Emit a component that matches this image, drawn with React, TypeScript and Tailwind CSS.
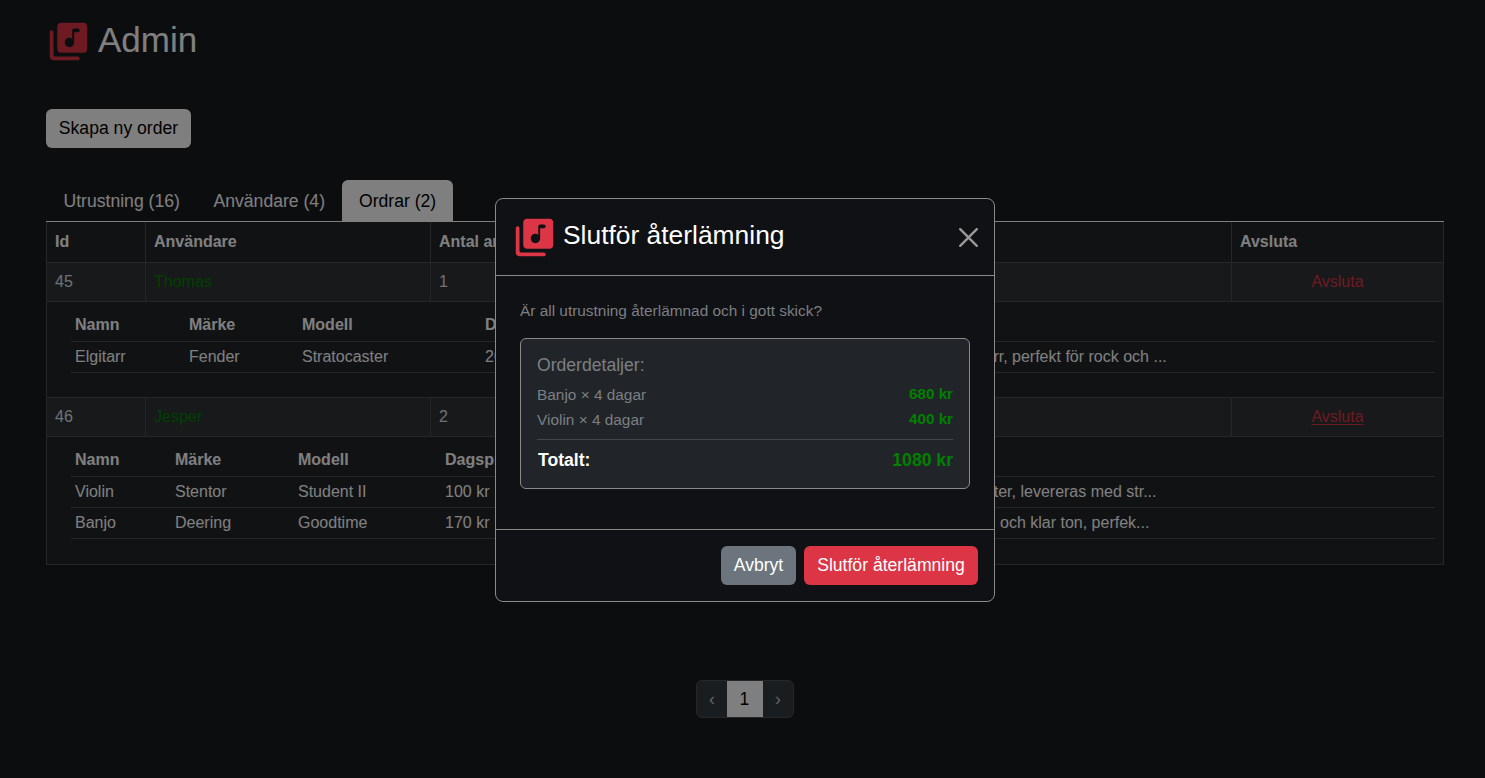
const musicPath =
  "M20 2H8c-1.1 0-2 .9-2 2v12c0 1.1.9 2 2 2h12c1.1 0 2-.9 2-2V4c0-1.1-.9-2-2-2zm-2 5h-3v5.5c0 1.38-1.12 2.5-2.5 2.5S10 13.88 10 12.5s1.12-2.5 2.5-2.5c.57 0 1.08.19 1.5.51V6c0-.55.45-1 1-1h2c.55 0 1 .45 1 1s-.45 1-1 1zM3 6c-.55 0-1 .45-1 1v13c0 1.1.9 2 2 2h13c.55 0 1-.45 1-1s-.45-1-1-1H5c-.55 0-1-.45-1-1V7c0-.55-.45-1-1-1z"

function LibraryIcon({className = ""}: { className?: string }) {
    return (
        <svg viewBox="0 0 24 24" className={`w-[45px] h-[45px] shrink-0 fill-[#dc3545] ${className}`}>
            <path d={musicPath}/>
        </svg>
    )
}

interface Item {
    name: string
    brand: string
    model: string
    price: string
    description: string
}

const firstOrder: Item[] = [
    {
        name: "Elgitarr",
        brand: "Fender",
        model: "Stratocaster",
        price: "200 kr",
        description: "Klassisk elgitarr, perfekt för rock och ...",
    },
]

const secondOrder: Item[] = [
    {
        name: "Violin",
        brand: "Stentor",
        model: "Student II",
        price: "100 kr",
        description: "Fiol för nybörjare och studenter, levereras med str...",
    },
    {
        name: "Banjo",
        brand: "Deering",
        model: "Goodtime",
        price: "170 kr",
        description: "Fin banjo med ljus klangfärg, och klar ton, perfek...",
    },
]

function ItemTable({items, widths, descPad}: { items: Item[]; widths: string[]; descPad: string }) {
    return (
        <table className="w-[1364px] table-fixed border-collapse">
            <colgroup>
                {widths.map((w) => (
                    <col key={w} className={w}/>
                ))}
                <col/>
            </colgroup>
            <thead>
            <tr className="border-b border-[#495057]">
                <th className="px-1 pt-1 pb-1 text-left font-bold leading-6">Namn</th>
                <th className="px-1 pt-1 pb-1 text-left font-bold leading-6">Märke</th>
                <th className="px-1 pt-1 pb-1 text-left font-bold leading-6">Modell</th>
                <th className="px-1 pt-1 pb-1 text-left font-bold leading-6">Dagspris</th>
                <th className={`pr-1 pt-1 pb-1 text-left font-bold leading-6 ${descPad}`}>Beskrivning</th>
            </tr>
            </thead>
            <tbody>
            {items.map((item) => (
                <tr key={item.name} className="border-b border-[#495057]">
                    <td className="px-1 py-[3px] leading-6">{item.name}</td>
                    <td className="px-1 py-[3px] leading-6">{item.brand}</td>
                    <td className="px-1 py-[3px] leading-6">{item.model}</td>
                    <td className="px-1 py-[3px] leading-6">{item.price}</td>
                    <td className={`pr-1 py-[3px] leading-6 whitespace-nowrap ${descPad}`}>{item.description}</td>
                </tr>
            ))}
            </tbody>
        </table>
    )
}

function OrderRow({id, user, count, items, widths, descPad, bottom, hover}: {
    id: number
    user: string
    count: number
    items: Item[]
    widths: string[]
    descPad: string
    bottom: string
    hover?: boolean
}) {
    return (
        <>
            <tr className="bg-[#2f3236] text-[#dee2e6]">
                <td className="border border-[#495057] px-2 py-[7px] leading-6">{id}</td>
                <td className="border border-[#495057] px-2 py-[7px] leading-6 text-[#008000]">{user}</td>
                <td className="border border-[#495057] px-2 py-[7px] leading-6">{count}</td>
                <td className="border border-[#495057] px-2 py-[7px] leading-6"></td>
                <td className="border border-[#495057] px-2 py-[7px] leading-6 text-center text-[#dc3545]">
                    <span className={hover ? "underline underline-offset-2" : ""}>Avsluta</span>
                </td>
            </tr>
            <tr>
                <td colSpan={5} className={`border border-[#495057] pl-6 pr-2 pt-[7px] ${bottom}`}>
                    <ItemTable items={items} widths={widths} descPad={descPad}/>
                </td>
            </tr>
        </>
    )
}

export default function App() {
    return (
        <div className="min-h-[778px] bg-[#181a1f] text-white pl-[46px] pr-[41px] font-['Liberation_Sans',Arial,sans-serif] text-base">
            <div className="flex items-center gap-[7px] pt-[19px]">
                <LibraryIcon/>
                <h1 className="text-[35px] leading-[41px] pb-1 font-normal">Admin</h1>
            </div>

            <button className="mt-[45px] h-[39px] w-[145px] rounded-md bg-white text-[17.6px] text-black">
                Skapa ny order
            </button>

            <div className="mt-8 flex border-b border-white text-[17.6px]">
                <div className="h-[41px] w-[151px] pl-[17.5px] pt-px leading-[41px]">Utrustning (16)</div>
                <div className="h-[41px] w-[145px] pl-[16.5px] pt-px leading-[41px]">Användare (4)</div>
                <div className="h-[41px] w-[111px] rounded-t-md bg-white pl-[17px] pt-px leading-[41px] text-black">Ordrar (2)</div>
            </div>

            <table className="w-[1397px] table-fixed border-collapse bg-[#212529]">
                <colgroup>
                    <col className="w-[99px]"/>
                    <col className="w-[285px]"/>
                    <col className="w-[280px]"/>
                    <col className="w-[521px]"/>
                    <col className="w-[212px]"/>
                </colgroup>
                <thead>
                <tr>
                    <th className="border border-t-0 border-[#495057] px-2 py-2 text-left leading-6 font-bold">Id</th>
                    <th className="border border-t-0 border-[#495057] px-2 py-2 text-left leading-6 font-bold">Användare</th>
                    <th className="border border-t-0 border-[#495057] px-2 py-2 text-left leading-6 font-bold">Antal artiklar</th>
                    <th className="border border-t-0 border-[#495057] px-2 py-2 text-left leading-6 font-bold">Totalpris</th>
                    <th className="border border-t-0 border-[#495057] px-2 py-2 text-left leading-6 font-bold">Avsluta</th>
                </tr>
                </thead>
                <tbody>
                <OrderRow id={45} user="Thomas" count={1} items={firstOrder} bottom="pb-6"
                          widths={["w-[114px]", "w-[113px]", "w-[183px]", "w-[100px]"]} descPad="pl-[311px]"/>
                <OrderRow id={46} user="Jesper" count={2} items={secondOrder} bottom="pb-[25px]" hover
                          widths={["w-[100px]", "w-[123px]", "w-[147px]", "w-[101px]"]} descPad="pl-[249px]"/>
                </tbody>
            </table>

            <div className="mt-[115px] flex justify-center pr-px">
                <div className="flex h-[38px] overflow-hidden rounded-md border border-[#495057] bg-[#343a40] text-[17.6px]">
                    <div className="flex w-[30px] items-center justify-center pl-px text-[#c0c8d0]">‹</div>
                    <div className="flex w-[36px] items-center justify-center bg-white text-black">1</div>
                    <div className="flex w-[30px] items-center justify-center pl-px text-[#c0c8d0]">›</div>
                </div>
            </div>

            {/* modal */}
            <div className="fixed inset-0 bg-black/50">
                <div className="ml-[495px] mt-[198px] w-[500px] rounded-lg border border-[#8a8a8a] bg-[#101114]">
                    <div className="flex h-[77px] items-center justify-between border-b border-[#8a8a8a] pl-4 pr-4">
                        <div className="flex items-center gap-1.5 pb-1">
                            <LibraryIcon className="mt-1"/>
                            <h5 className="text-[26.4px] leading-8">Slutför återlämning</h5>
                        </div>
                        <svg viewBox="0 0 16 16" className="w-[19px] h-[19px] fill-[#999999]">
                            <path d="M.293.293a1 1 0 0 1 1.414 0L8 6.586 14.293.293a1 1 0 1 1 1.414 1.414L9.414 8l6.293 6.293a1 1 0 0 1-1.414 1.414L8 9.414l-6.293 6.293a1 1 0 0 1-1.414-1.414L6.586 8 .293 1.707a1 1 0 0 1 0-1.414z"/>
                        </svg>
                    </div>
                    <div className="px-6 pt-6 pb-10">
                        <p className="text-[15.4px] leading-[21px] text-[#7b7f83] mb-[17px]">Är all utrustning återlämnad och i gott skick?</p>
                        <div className="rounded-md border border-[#8a8a8a] bg-[#212529] px-4 pt-4 pb-[17px]">
                            <div className="text-[17.6px] leading-[21px] text-[#7b7f83] mb-[6px]">Orderdetaljer:</div>
                            <div className="flex justify-between h-[25px] items-center text-[15.4px] text-[#7b7f83]">
                                <span>Banjo × 4 dagar</span>
                                <span className="font-bold text-[15.2px] text-[#008000]">680 kr</span>
                            </div>
                            <div className="flex justify-between h-[25px] items-center text-[15.4px] text-[#7b7f83]">
                                <span>Violin × 4 dagar</span>
                                <span className="font-bold text-[15.2px] text-[#008000]">400 kr</span>
                            </div>
                            <div className="mt-[7px] border-t border-[#42464b] pt-[10px] flex justify-between items-center text-[17.6px] leading-[21px] font-bold">
                                <span className="pl-px">Totalt:</span>
                                <span className="text-[#008000]">1080 kr</span>
                            </div>
                        </div>
                    </div>
                    <div className="flex justify-end gap-2 border-t border-[#8a8a8a] p-4 text-[17.6px]">
                        <button className="h-[39px] w-[75px] rounded-md bg-[#6c757d] text-white">Avbryt</button>
                        <button className="h-[39px] w-[174px] rounded-md bg-[#dc3545] text-white">Slutför återlämning</button>
                    </div>
                </div>
            </div>
        </div>
    )
}
